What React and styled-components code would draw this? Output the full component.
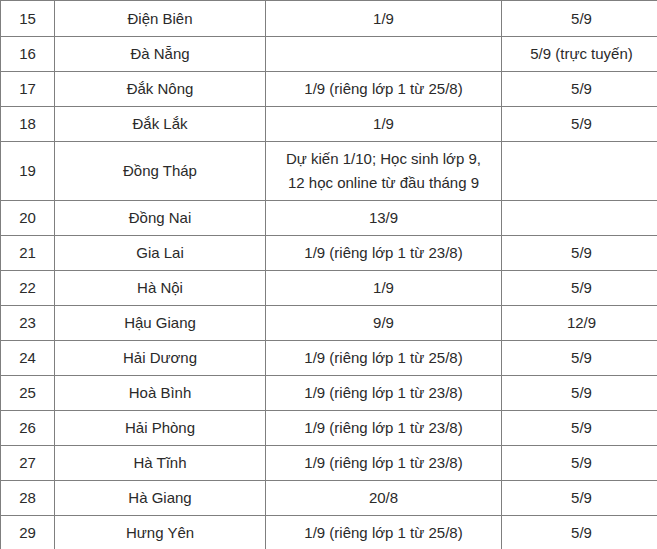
import React from "react";
import styled, { createGlobalStyle } from "styled-components";

const GlobalStyle = createGlobalStyle`
  html, body {
    margin: 0;
    padding: 0;
    background: #ffffff;
    overflow: hidden;
  }
  body {
    font-family: "Liberation Sans", Arial, sans-serif;
  }
`;

const Table = styled.table`
  border-collapse: collapse;
  table-layout: fixed;
  width: 661px;
  font-family: "Liberation Sans", Arial, sans-serif;
  font-size: 15px;
  color: #2a2a2a;
`;

const Col = styled.col`
  width: ${(p) => p.$w}px;
`;

const Cell = styled.td`
  border: 1px solid #7f7f7f;
  padding: 5px 6px;
  height: 24px;
  line-height: 24px;
  text-align: center;
  vertical-align: middle;
  white-space: nowrap;
`;

const WrapCell = styled(Cell)`
  white-space: normal;
`;

const FirstRow = styled.tr`
  & > td {
    padding-top: 6px;
  }
`;

const colWidths = [54, 211, 236, 160];

const rows = [
  ["15", "Điện Biên", "1/9", "5/9"],
  ["16", "Đà Nẵng", "", "5/9 (trực tuyến)"],
  ["17", "Đắk Nông", "1/9 (riêng lớp 1 từ 25/8)", "5/9"],
  ["18", "Đắk Lắk", "1/9", "5/9"],
  ["19", "Đồng Tháp", ["Dự kiến 1/10; Học sinh lớp 9,", "12 học online từ đầu tháng 9"], ""],
  ["20", "Đồng Nai", "13/9", ""],
  ["21", "Gia Lai", "1/9 (riêng lớp 1 từ 23/8)", "5/9"],
  ["22", "Hà Nội", "1/9", "5/9"],
  ["23", "Hậu Giang", "9/9", "12/9"],
  ["24", "Hải Dương", "1/9 (riêng lớp 1 từ 25/8)", "5/9"],
  ["25", "Hoà Bình", "1/9 (riêng lớp 1 từ 23/8)", "5/9"],
  ["26", "Hải Phòng", "1/9 (riêng lớp 1 từ 23/8)", "5/9"],
  ["27", "Hà Tĩnh", "1/9 (riêng lớp 1 từ 23/8)", "5/9"],
  ["28", "Hà Giang", "20/8", "5/9"],
  ["29", "Hưng Yên", "1/9 (riêng lớp 1 từ 25/8)", "5/9"],
];

const App = () => {
  return (
    <>
      <GlobalStyle />
      <Table>
        <colgroup>
          {colWidths.map((w, i) => (
            <Col key={i} $w={w} />
          ))}
        </colgroup>
        <tbody>
          {rows.map(([no, name, open, start], i) => {
            const Row = i === 0 ? FirstRow : "tr";
            return (
              <Row key={no}>
                <Cell>{no}</Cell>
                <Cell>{name}</Cell>
                {Array.isArray(open) ? (
                  <WrapCell>
                    {open[0]}
                    <br />
                    {open[1]}
                  </WrapCell>
                ) : (
                  <Cell>{open}</Cell>
                )}
                <Cell>{start}</Cell>
              </Row>
            );
          })}
        </tbody>
      </Table>
    </>
  );
};

export default App;
